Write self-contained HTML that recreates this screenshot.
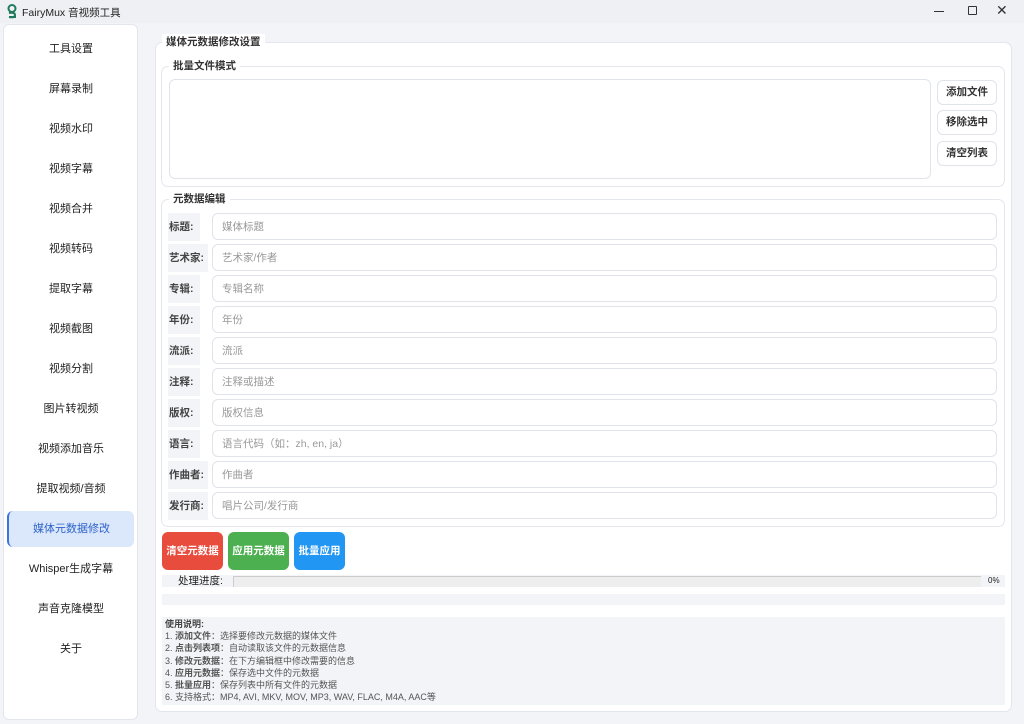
<!DOCTYPE html>
<html><head><meta charset="utf-8"><style>
*{box-sizing:border-box;margin:0;padding:0}
body{width:1024px;height:724px;background:#f3f4f8;font-family:"Liberation Sans","Noto Sans CJK SC",sans-serif;font-size:11px;color:#222;position:relative;overflow:hidden}
.a{position:absolute}
.tb{left:0;top:0;width:1024px;height:23px;background:#eef0f4}
.side{left:3px;top:24px;width:135px;height:696px;background:#fff;border:1px solid #e3e6ec;border-radius:6px}
.it{position:absolute;left:4px;width:126px;height:36px;line-height:36px;text-align:center;font-size:11px;color:#222}
.sel{background:#dbe7fb;color:#2d64c8;border-left:2px solid #3b74e0;border-radius:6px}
.panel{background:#fff;border:1px solid #e3e6ec;border-radius:7px}
.gt{background:#fff;padding:0 4px;font-weight:bold;font-size:10.5px;color:#333}
.lb{background:#f3f4f8;height:28px;line-height:28px;font-size:10.5px;font-weight:bold;color:#444;padding-left:1px}
.in{left:212px;width:785px;height:27px;border:1px solid #e0e3ea;border-radius:6px;background:#fff;color:#999;font-size:10.5px;line-height:27px;padding-left:9px}
.sb{left:937px;width:60px;height:25px;border:1px solid #e0e3ea;border-radius:6px;background:#fff;font-weight:bold;font-size:10.5px;text-align:center;line-height:23px;color:#333}
.cb{top:532px;height:38px;border-radius:6px;color:#fff;font-weight:bold;font-size:10.5px;text-align:center;line-height:38px}
</style></head><body>
<div class="a tb"></div>
<svg class="a" style="left:6px;top:4px" width="12" height="15" viewBox="0 0 12 15"><circle cx="6" cy="4.5" r="3.5" fill="none" stroke="#1e7a5a" stroke-width="2"/><path d="M3 9 Q9 8 9 11 Q9 14 3 13 M3 13 L10 13" fill="none" stroke="#1e7a5a" stroke-width="2"/></svg>
<div class="a" style="left:22px;top:5px;font-size:10.5px">FairyMux 音视频工具</div>
<div class="a" style="left:934px;top:11px;width:10px;height:1px;background:#333"></div>
<div class="a" style="left:968px;top:6px;width:9px;height:9px;border:1px solid #333;border-radius:1px"></div>
<div class="a" style="left:996px;top:2px;font-size:14px;color:#333">✕</div>
<div class="a side">
<div class="it" style="top:6px">工具设置</div>
<div class="it" style="top:46px">屏幕录制</div>
<div class="it" style="top:86px">视频水印</div>
<div class="it" style="top:126px">视频字幕</div>
<div class="it" style="top:166px">视频合并</div>
<div class="it" style="top:206px">视频转码</div>
<div class="it" style="top:246px">提取字幕</div>
<div class="it" style="top:286px">视频截图</div>
<div class="it" style="top:326px">视频分割</div>
<div class="it" style="top:366px">图片转视频</div>
<div class="it" style="top:406px">视频添加音乐</div>
<div class="it" style="top:446px">提取视频/音频</div>
<div class="it sel" style="top:486px;left:3px;width:127px">媒体元数据修改</div>
<div class="it" style="top:526px">Whisper生成字幕</div>
<div class="it" style="top:566px">声音克隆模型</div>
<div class="it" style="top:606px">关于</div>
</div>
<div class="a panel" style="left:155px;top:42px;width:857px;height:670px"></div>
<div class="a gt" style="left:162px;top:34px">媒体元数据修改设置</div>
<div class="a panel" style="left:161px;top:66px;width:844px;height:121px"></div>
<div class="a gt" style="left:169px;top:58px">批量文件模式</div>
<div class="a" style="left:169px;top:79px;width:762px;height:100px;border:1px solid #e0e3ea;border-radius:6px"></div>
<div class="a sb" style="top:80px">添加文件</div>
<div class="a sb" style="top:110px">移除选中</div>
<div class="a sb" style="top:141px">清空列表</div>
<div class="a panel" style="left:161px;top:199px;width:844px;height:328px"></div>
<div class="a gt" style="left:169px;top:191px">元数据编辑</div>
<div class="a lb" style="left:168px;top:213px;width:32px">标题:</div><div class="a in" style="top:213px">媒体标题</div>
<div class="a lb" style="left:168px;top:244px;width:40px">艺术家:</div><div class="a in" style="top:244px">艺术家/作者</div>
<div class="a lb" style="left:168px;top:275px;width:32px">专辑:</div><div class="a in" style="top:275px">专辑名称</div>
<div class="a lb" style="left:168px;top:306px;width:32px">年份:</div><div class="a in" style="top:306px">年份</div>
<div class="a lb" style="left:168px;top:337px;width:32px">流派:</div><div class="a in" style="top:337px">流派</div>
<div class="a lb" style="left:168px;top:368px;width:32px">注释:</div><div class="a in" style="top:368px">注释或描述</div>
<div class="a lb" style="left:168px;top:399px;width:32px">版权:</div><div class="a in" style="top:399px">版权信息</div>
<div class="a lb" style="left:168px;top:430px;width:32px">语言:</div><div class="a in" style="top:430px">语言代码（如：zh, en, ja）</div>
<div class="a lb" style="left:168px;top:461px;width:40px">作曲者:</div><div class="a in" style="top:461px">作曲者</div>
<div class="a lb" style="left:168px;top:492px;width:40px">发行商:</div><div class="a in" style="top:492px">唱片公司/发行商</div>
<div class="a cb" style="left:162px;width:61px;background:#e84c3d">清空元数据</div>
<div class="a cb" style="left:228px;width:61px;background:#4caf50">应用元数据</div>
<div class="a cb" style="left:294px;width:51px;background:#2196f3">批量应用</div>
<div class="a" style="left:162px;top:575px;width:843px;height:12px;background:#f3f4f8"></div>
<div class="a" style="left:178px;top:575px;font-size:10.5px;line-height:12px">处理进度:</div>
<div class="a" style="left:233px;top:576px;width:748px;height:11px;background:#eee;border:1px solid #ccc;border-right:none;border-bottom:none"></div>
<div class="a" style="left:988px;top:576px;font-size:8px">0%</div>
<div class="a" style="left:162px;top:594px;width:843px;height:11px;background:#f3f4f8"></div>
<div class="a" style="left:162px;top:617px;width:843px;height:88px;background:#f3f4f8"></div>
<div class="a" style="left:165px;top:618px;font-size:9px;line-height:12.2px;color:#555"><b style="color:#444">使用说明:</b><br>1. <b>添加文件</b>：选择要修改元数据的媒体文件<br>2. <b>点击列表项</b>：自动读取该文件的元数据信息<br>3. <b>修改元数据</b>：在下方编辑框中修改需要的信息<br>4. <b>应用元数据</b>：保存选中文件的元数据<br>5. <b>批量应用</b>：保存列表中所有文件的元数据<br>6. 支持格式：MP4, AVI, MKV, MOV, MP3, WAV, FLAC, M4A, AAC等</div>
</body></html>
